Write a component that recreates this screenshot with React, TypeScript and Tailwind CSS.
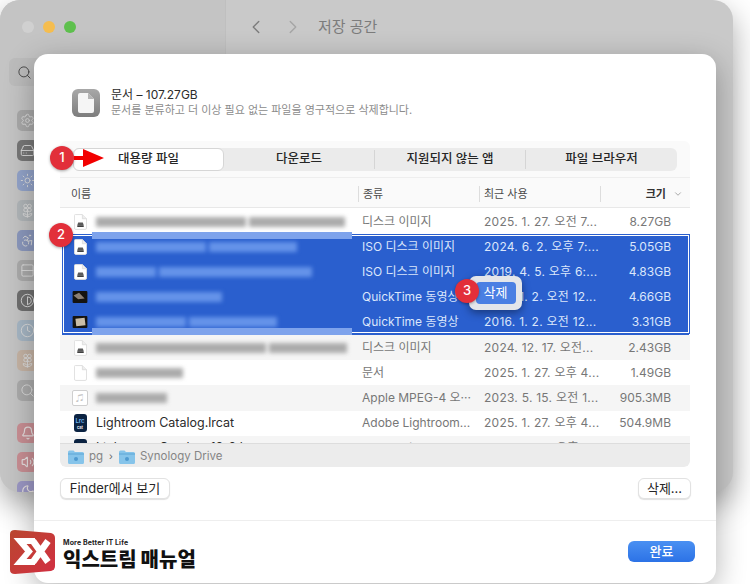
import {
  Accessibility,
  Bell,
  ChevronDown,
  ChevronLeft,
  ChevronRight,
  Clock,
  Contrast,
  Flower2,
  HardDrive,
  Moon,
  Rows2,
  Search,
  Settings,
  Sun,
  Volume2,
} from "lucide-react";

const rows = [
  { icon: "disk", blur: [150, 96], type: "디스크 이미지", date: "2025. 1. 27. 오전 7...", size: "8.27GB" },
  { icon: "disk", blur: [110, 88], type: "ISO 디스크 이미지", date: "2024. 6. 2. 오후 7:...", size: "5.05GB", selected: true },
  { icon: "disk", blur: [60, 153], type: "ISO 디스크 이미지", date: "2019. 4. 5. 오후 6:...", size: "4.83GB", selected: true },
  { icon: "film", blur: [126], type: "QuickTime 동영상", date: "2016. 1. 2. 오전 12...", size: "4.66GB", selected: true },
  { icon: "photo", blur: [90, 88], type: "QuickTime 동영상", date: "2016. 1. 2. 오전 12...", size: "3.31GB", selected: true },
  { icon: "disk", blur: [170, 78], type: "디스크 이미지", date: "2024. 12. 17. 오전...", size: "2.43GB", shade: true },
  { icon: "doc", blur: [87], type: "문서", date: "2025. 1. 27. 오후 4...", size: "1.49GB" },
  { icon: "music", blur: [71], type: "Apple MPEG-4 오···", date: "2023. 5. 15. 오전 1...", size: "905.3MB", shade: true },
  { icon: "lrc", name: "Lightroom Catalog.lrcat", type: "Adobe Lightroom...", date: "2025. 1. 27. 오후 4...", size: "504.9MB" },
  { icon: "lrc", name: "Lightroom Catalog-13-2.lrcat", type: "Adobe Lightroom...", date: "2025. 1. 28. 오후...", size: "401.4MB", shade: true },
];

const sideIcons = [
  { bg: "bg-[#a9a9a9]", Icon: Settings },
  { bg: "bg-[#777777]", Icon: HardDrive },
  { bg: "bg-[#92a3c9]", Icon: Sun },
  { bg: "bg-[#b0b5b8]", Icon: Flower2 },
  { bg: "bg-[#8b98bd]", Icon: Accessibility },
  { bg: "bg-[#ababab]", Icon: Rows2 },
  { bg: "bg-[#6f6f6f]", Icon: Contrast },
  { bg: "bg-[#a6b6c4]", Icon: Clock },
  { bg: "bg-[#c5b3a4]", Icon: Flower2 },
  { bg: "bg-[#ababab]", Icon: Search },
];

function FileIcon({ kind }: { kind: string }) {
  if (kind === "film" || kind === "photo") {
    return (
      <svg width="16" height="12" viewBox="0 0 16 13">
        <rect width="16" height="13" rx="1" fill="#15130f" />
        {kind === "film" ? (
          <path d="M1 5 L7 2 L13 8 L6 9 Z" fill="#8b7f74" />
        ) : (
          <path d="M3 3 L13 2 L14 10 L4 11 Z" fill="#c9bda8" />
        )}
      </svg>
    );
  }
  if (kind === "lrc") {
    return (
      <div className="flex h-[18px] w-[13px] flex-col items-center justify-center rounded-[3px] bg-[#0b2342] pt-px text-[6px] leading-[8px] font-semibold text-[#6fb4ee]">
        <span>Lrc</span>
        <span className="text-[4px] leading-[5px] text-white">cat</span>
      </div>
    );
  }
  if (kind === "music") {
    return (
      <div className="flex h-[16px] w-[16px] items-center justify-center rounded-[2px] border border-[#cfcfcf] bg-white text-[8px] text-[#c5c5c5]">
        ♫
      </div>
    );
  }
  return (
    <svg width="13" height="16" viewBox="0 0 14 17">
      <path d="M1.5 .5 H9 L13.5 5 V15 Q13.5 16.5 12 16.5 H2 Q.5 16.5 .5 15 V1.5 Q.5 .5 1.5 .5 Z" fill="#ffffff" stroke="#dddddd" />
      <path d="M9 .5 V5 H13.5" fill="#eeeeee" stroke="#dddddd" />
      {kind === "disk" && (
        <g>
          <path d="M4.5 9 H9.5 L10.5 12 H3.5 Z" fill="#5b5b5b" />
          <rect x="3.5" y="12" width="7" height="2" rx=".5" fill="#3f3f3f" />
        </g>
      )}
    </svg>
  );
}

function Folder({ tint }: { tint: string }) {
  return (
    <svg width="16" height="14" viewBox="0 0 16 14">
      <path d="M0 2 Q0 .5 1.5 .5 H5.5 L7 2 H14.5 Q16 2 16 3.5 V12.5 Q16 14 14.5 14 H1.5 Q0 14 0 12.5 Z" fill={tint} />
      <path d="M0 3.5 H16 V4.5 H0 Z" fill="#4f9ad0" opacity=".7" />
      <circle cx="8" cy="9" r="2" fill="#4f9ad0" />
    </svg>
  );
}

function Badge({ n, className }: { n: number; className: string }) {
  return (
    <div
      className={`absolute flex h-[24px] w-[24px] items-center justify-center rounded-full bg-[#e22f3a] text-[13px] font-medium text-white shadow-[0_1px_3px_rgba(0,0,0,0.35)] ${className}`}
    >
      {n}
    </div>
  );
}

export default function App() {
  return (
    <div className="relative h-[584px] w-[750px] overflow-hidden bg-white font-['Inter','Noto_Sans_CJK_KR',sans-serif]">
      {/* 뒤쪽 시스템 설정 창 */}
      <div className="flex h-[492px] w-[733px] overflow-hidden rounded-[20px] bg-[#c9c9c9] shadow-[0_12px_30px_rgba(0,0,0,0.35)]">
        <div className="w-[226px] shrink-0 border-r border-[#bfbfbf] bg-[#c4c4c4] pl-[17px]">
          <div className="flex h-[54px] items-center gap-[14px] pl-[5px]">
            <span className="h-[12px] w-[12px] rounded-full bg-[#d0d0d0]" />
            <span className="-ml-[5px] h-[12px] w-[12px] rounded-full bg-[#f5bd4f]" />
            <span className="-ml-[5px] h-[12px] w-[12px] rounded-full bg-[#5ec04d]" />
          </div>
          <div className="mt-[4px] -ml-[8px] flex h-[28px] w-[40px] items-center rounded-l-[6px] bg-[#bcbcbc] pl-[8px] text-[#444444]">
            <Search size={15} strokeWidth={1.5} />
          </div>
          <div className="mt-[24px] flex flex-col gap-[9px]">
            {sideIcons.map(({ bg, Icon }, i) => (
              <div key={i} className={`flex h-[21px] w-[21px] items-center justify-center rounded-[5px] text-[#dcdcdc] ${bg}`}>
                <Icon size={15} strokeWidth={1.5} />
              </div>
            ))}
            <div className="mt-[13px] flex h-[20px] w-[21px] items-center justify-center rounded-[5px] bg-[#c98f94] text-[#e6e0e0]">
              <Bell size={14} strokeWidth={2} />
            </div>
            <div className="flex h-[20px] w-[21px] items-center justify-center rounded-[5px] bg-[#c98f94] text-[#e6e0e0]">
              <Volume2 size={14} strokeWidth={2} />
            </div>
            <div className="flex h-[20px] w-[21px] items-center justify-center rounded-[5px] bg-[#9b97c4] text-[#e6e0e0]">
              <Moon size={14} strokeWidth={2} />
            </div>
          </div>
        </div>
        <div className="flex h-[54px] flex-1 items-center gap-[15px] pl-[19px] text-[#7c7c7c]">
          <ChevronLeft size={22} strokeWidth={1.5} />
          <ChevronRight size={22} strokeWidth={1.5} className="text-[#a5a5a5]" />
          <span className="-ml-[1px] text-[15px]">저장 공간</span>
        </div>
      </div>

      {/* 시트 */}
      <div className="absolute top-[54px] left-[34px] flex h-[529px] w-[682px] flex-col rounded-[14px] bg-white shadow-[0_8px_30px_rgba(0,0,0,0.3)]">
        <div className="flex items-center gap-[11px] px-[38px] pt-[33px]">
          <div className="flex h-[28px] w-[28px] items-center justify-center rounded-[6px] bg-gradient-to-b from-[#a8a8a8] to-[#7d7d7d]">
            <svg width="16" height="20" viewBox="0 0 16 20">
              <path d="M2 0 H10 L16 6 V18 Q16 20 14 20 H2 Q0 20 0 18 V2 Q0 0 2 0 Z" fill="#f5f5f5" />
              <path d="M10 0 V6 H16" fill="#b5b5b5" />
            </svg>
          </div>
          <div>
            <div className="text-[12px] leading-[16px] text-[#2b2b2b]">문서 – 107.27GB</div>
            <div className="text-[11px] leading-[15px] text-[#8c8c8c]">
              문서를 분류하고 더 이상 필요 없는 파일을 영구적으로 삭제합니다.
            </div>
          </div>
        </div>

        <div className="mx-[26px] mt-[23px] flex h-[326px] flex-col overflow-hidden rounded-[6px] bg-[#fafafa]">
          <div className="h-[37px] shrink-0 border-b border-[#eeeeee] px-[13px] pt-[7px]">
            <div className="flex h-[23px] items-center rounded-[6px] bg-[#ebebeb] text-[12.5px] font-medium text-[#262626]">
              <div className="flex h-[23px] w-[151px] items-center justify-center rounded-[6px] border border-[#d6d6d6] bg-white">
                대용량 파일
              </div>
              <div className="flex w-[150px] justify-center">다운로드</div>
              <div className="flex w-[152px] justify-center border-x border-[#d5d5d5]">지원되지 않는 앱</div>
              <div className="flex flex-1 justify-center">파일 브라우저</div>
            </div>
          </div>
          <div className="grid h-[30px] shrink-0 grid-cols-[298px_121px_121px_90px] items-center border-b border-[#e8e8e8] pt-[3px] text-[11px] text-[#4a4a4a]">
            <div className="pl-[11px]">이름</div>
            <div className="border-l border-[#dddddd] pl-[4px]">종류</div>
            <div className="border-l border-[#dddddd] pl-[4px]">최근 사용</div>
            <div className="flex items-center justify-end gap-[7px] border-l border-[#dddddd] pr-[7px] font-semibold text-[#333333]">
              크기
              <ChevronDown size={10} className="text-[#999999]" />
            </div>
          </div>
          <div className="relative flex-1 overflow-hidden bg-white pt-[1px]">
            {rows.map((r, i) => (
              <div
                key={i}
                className={`grid h-[25.2px] grid-cols-[298px_121px_121px_90px] items-center text-[12px] ${
                  r.selected
                    ? "bg-[#2a5fce] text-[#dbe6fb] shadow-[inset_2px_0_0_#ffffff,inset_-1px_0_0_#ffffff]"
                    : r.shade
                      ? "bg-[#f5f5f5] text-[#777777]"
                      : "bg-white text-[#777777]"
                }`}
              >
                <div className="flex items-center">
                  <div className="flex w-[36px] justify-center pl-[4px]">
                    <FileIcon kind={r.icon} />
                  </div>
                  {r.name ? (
                    <span className="text-[12.5px] text-[#2b2b2b]">{r.name}</span>
                  ) : (
                    <div className="flex gap-[3px] blur-[2px]">
                      {r.blur?.map((w, j) => (
                        <div
                          key={j}
                          style={{ width: w }}
                          className={`h-[10px] ${r.selected ? "bg-[#6593e9]" : "bg-[#ababab]"}`}
                        />
                      ))}
                    </div>
                  )}
                </div>
                <div className="truncate pl-[4px]">{r.type}</div>
                <div className="truncate pl-[5px] tracking-[0.25px]">{r.date}</div>
                <div className="pr-[19px] text-right">{r.size}</div>
              </div>
            ))}
            <div className="pointer-events-none absolute top-[27px] left-[3px] h-[98px] w-[626px] border border-white outline outline-[#2a5fce]" />
            <div className="absolute top-[24px] left-[32px] h-[7px] w-[260px] bg-[#7ea3ec]" />
            <div className="absolute top-[120px] left-[32px] h-[7px] w-[260px] bg-[#7ea3ec]" />
          </div>
          <div className="flex h-[24px] shrink-0 items-center gap-[5px] rounded-b-[6px] border-t border-[#dddddd] bg-[#ececec] pt-[2px] pl-[8px] text-[11.5px] text-[#858585]">
            <Folder tint="#86c4ea" />
            pg
            <span className="mx-[1px] text-[10px] text-[#666666]">›</span>
            <Folder tint="#86c4ea" />
            Synology Drive
          </div>
        </div>

        <div className="mt-[11px] flex justify-between px-[26px]">
          <button className="flex h-[21px] w-[110px] items-center justify-center rounded-[6px] border border-[#e2e2e2] bg-white text-[13px] text-[#262626] shadow-[0_1px_1px_rgba(0,0,0,0.12)]">
            Finder에서 보기
          </button>
          <button className="-mr-px flex h-[21px] w-[53px] items-center justify-center rounded-[6px] border border-[#e2e2e2] bg-white text-[13px] text-[#262626] shadow-[0_1px_1px_rgba(0,0,0,0.12)]">
            삭제...
          </button>
        </div>

        <div className="mt-[21px] flex flex-1 justify-end border-t border-[#eeeeee] px-[21px] pt-[20px]">
          <button className="flex h-[21px] w-[67px] items-center justify-center rounded-[6px] bg-gradient-to-b from-[#4a90f2] to-[#2c72e6] text-[13px] font-medium text-white">
            완료
          </button>
        </div>

        <div className="absolute top-[222px] left-[435px] flex h-[34px] w-[53px] items-center justify-center rounded-[7px] bg-[#e4e6ea] shadow-[0_3px_8px_rgba(0,0,0,0.4)]">
          <div className="flex h-[22px] w-[40px] items-center justify-center rounded-[4px] bg-[#4a7fe3] text-[13px] text-white">
            삭제
          </div>
        </div>
      </div>

      {/* 안내 표시 */}
      <Badge n={1} className="top-[146px] left-[50px]" />
      <Badge n={2} className="top-[223px] left-[49px]" />
      <Badge n={3} className="top-[279px] left-[455px]" />
      <svg className="absolute top-[148px] left-[72px]" width="34" height="20" viewBox="0 0 34 20">
        <path d="M2 8 H11 V1 L32 10 L11 19 V12 H2 Z" fill="#f20000" />
      </svg>

      {/* 로고 */}
      <div className="absolute top-[529px] left-[10px] flex items-start gap-[8px]">
        <svg width="46" height="46" viewBox="0 0 46 46">
          <defs>
            <linearGradient id="logoFill" x1="0" y1="0" x2="1" y2="1">
              <stop offset="0" stopColor="#b9472f" />
              <stop offset="1" stopColor="#d22f42" />
            </linearGradient>
          </defs>
          <path d="M5 1 L41 4 Q45 5 45 9 V37 Q45 41 41 42 L5 45 Q0 45 0 41 V5 Q0 1 5 1 Z" fill="url(#logoFill)" />
          <path d="M25 12 H10 L19 22.5 L10 33 H25" fill="none" stroke="#ffffff" strokeWidth="6" />
          <path d="M23 12 L38 33 M38 12 L23 33" fill="none" stroke="#ffffff" strokeWidth="6.5" />
        </svg>
        <div className="-ml-px mt-[9px]">
          <div className="text-[7px] leading-[10px] font-bold tracking-[0.02em] text-[#222222]">More Better IT Life</div>
          <div className="text-[20px] leading-[24px] font-black text-[#111111]">익스트림 매뉴얼</div>
        </div>
      </div>
    </div>
  );
}
